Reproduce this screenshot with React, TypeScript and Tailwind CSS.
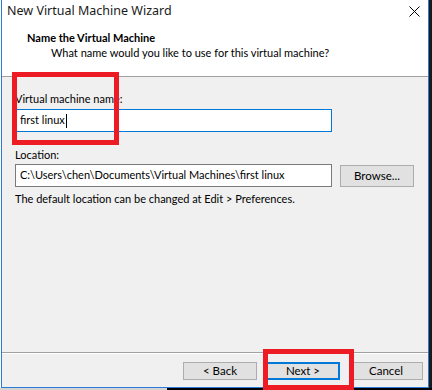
import React from 'react';

const titleFont = { fontFamily: '"Noto Sans", "Liberation Sans", sans-serif' };
const uiFont = { fontFamily: 'Lato, "Liberation Sans", sans-serif' };

function CloseIcon() {
  return (
    <svg width="11" height="11" viewBox="0 0 11 11" fill="none" stroke="#000" strokeWidth="1">
      <path d="M0.5 0.5 L10.5 10.5 M10.5 0.5 L0.5 10.5" />
    </svg>
  );
}

function Button({ label, focused }: { label: string; focused?: boolean }) {
  return (
    <div
      className={
        'flex h-[18px] w-[74px] items-center justify-center bg-[#e1e1e1] text-[11.5px] text-black ' +
        (focused ? 'border-2 border-[#0078d7]' : 'border border-[#adadad]')
      }
    >
      {label}
    </div>
  );
}

export default function App() {
  return (
    <div className="relative flex h-[390px] w-[432px] flex-col bg-[#1b1b1b]" style={uiFont}>
      <div className="flex h-[388px] w-[429px] bg-white">
        <div className="ml-px flex w-[428px] flex-col border-x border-b border-[#2b7bd4] bg-[#f0f0f0]">
          {/* title bar + header */}
          <div className="flex h-[76px] flex-col bg-white">
            <div className="flex h-[22px] items-center justify-between pl-[5px] pr-[8px]">
              <span className="text-[12.5px] text-[#1a1a1a]" style={titleFont}>
                New Virtual Machine Wizard
              </span>
              <CloseIcon />
            </div>
            <div className="pl-[25px] pt-[8px] text-[11px] font-bold leading-[15px] text-black">
              Name the Virtual Machine
            </div>
            <div className="pl-[49px] text-[11px] leading-[15px] text-black">
              What name would you like to use for this virtual machine?
            </div>
          </div>
          <div className="h-px bg-[#a0a0a0]" />

          {/* body */}
          <div className="flex flex-1 flex-col px-[13px] pt-[14px] text-[11px] text-black">
            <div className="leading-[15px]">Virtual machine name:</div>
            <div className="mt-[3px] flex h-[23px] w-[317px] items-center border border-[#0078d7] bg-white pl-[4px]">
              <span>first linux</span>
              <span className="ml-px h-[14px] w-px bg-black" />
            </div>
            <div className="mt-[15px] leading-[15px]">Location:</div>
            <div className="mt-[2px] flex items-center gap-[8px]">
              <div className="flex h-[23px] w-[317px] items-center border border-[#7a7a7a] bg-white pl-[4px]">
                C:\Users\chen\Documents\Virtual Machines\first linux
              </div>
              <div className="flex h-[22px] w-[74px] items-center justify-center border border-[#adadad] bg-[#e1e1e1] text-[11.5px]">
                Browse...
              </div>
            </div>
            <div className="mt-[4px] leading-[15px]">The default location can be changed at Edit &gt; Preferences.</div>
          </div>

          {/* footer */}
          <div className="h-px bg-[#a0a0a0]" />
          <div className="h-px bg-white" />
          <div className="flex h-[33px] items-start justify-end gap-[9px] pr-[5px] pt-[8px]">
            <Button label="< Back" />
            <Button label="Next >" focused />
            <Button label="Cancel" />
          </div>
        </div>
      </div>
      <div className="flex h-[2px] w-[432px]">
        <div className="h-full w-[167px] bg-[#d4d4d4]" />
        <div className="h-full flex-1 bg-black" />
      </div>

      {/* red annotation boxes */}
      <div className="absolute left-[12px] top-[72px] h-[73px] w-[107px] border-[5px] border-[#ed1c24]" />
      <div className="absolute left-[263px] top-[349px] h-[41px] w-[91px] border-[5px] border-[#ed1c24]" />
    </div>
  );
}
